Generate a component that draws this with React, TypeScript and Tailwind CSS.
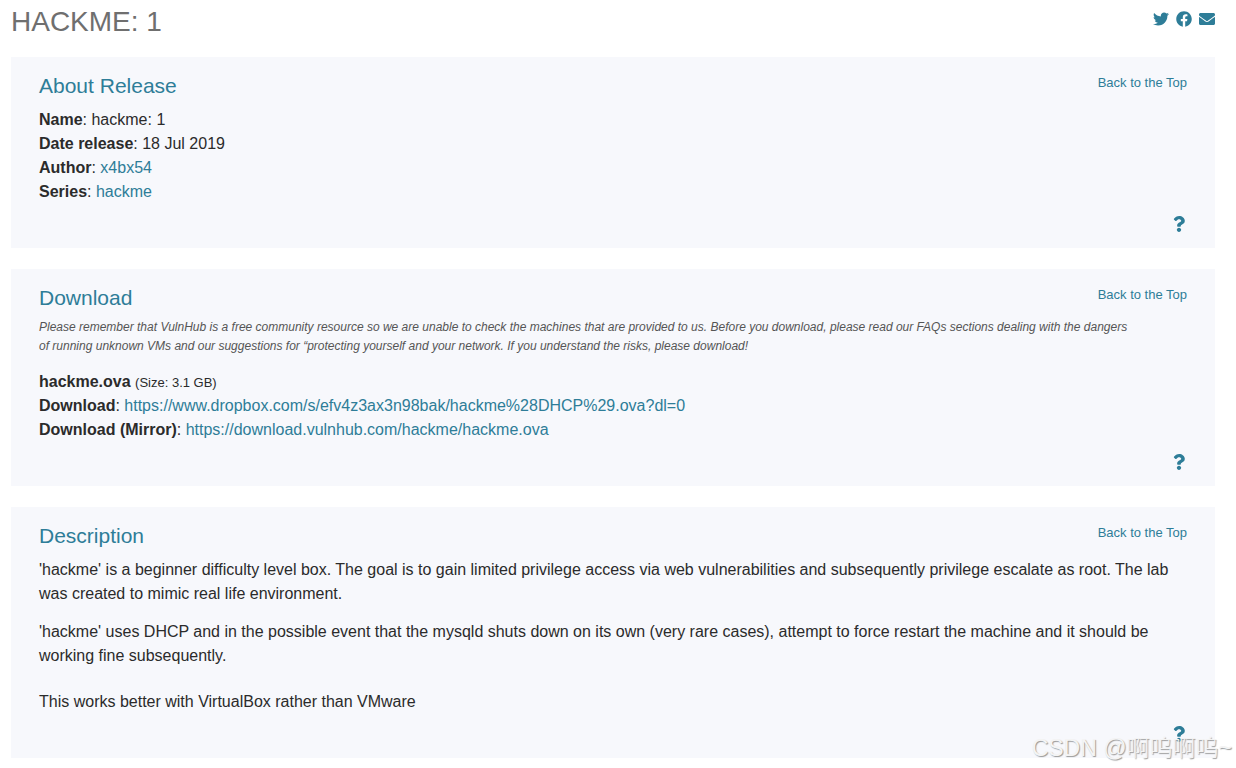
import type { ReactNode } from "react";
import { FaEnvelope, FaFacebook, FaQuestion, FaTwitter } from "react-icons/fa";

const links = [
  { label: "Twitter", icon: FaTwitter },
  { label: "Facebook", icon: FaFacebook },
  { label: "Email", icon: FaEnvelope },
];

function Panel({ id, title, children }: { id: string; title: string; children: ReactNode }) {
  return (
    <section id={id} className="bg-[#f7f8fc] px-7 pt-4 pb-3">
      <div className="flex items-start justify-between">
        <h2 className="text-[21px] leading-[26px] text-[#2e7d98]">{title}</h2>
        <a href="#top" className="text-[13px] leading-5 text-[#2e7d98]">Back to the Top</a>
      </div>
      {children}
      <div className="flex justify-end">
        <a href={`#${id}`} aria-label={`Help: ${title}`} className="mt-2 flex h-6 items-center text-[#2e7d98]">
          <FaQuestion size={16} />
        </a>
      </div>
    </section>
  );
}

export default function App() {
  return (
    <div id="top" className="relative bg-white pr-[21px] pb-2.5 pl-[11px] font-['Liberation_Sans',Arial,sans-serif] text-base leading-6 text-[#2b2b2b]">
      <header className="flex items-start justify-between pt-[3px] pb-4">
        <h1 className="text-[28px] leading-[38px] text-[#6f6f6f]">HACKME: 1</h1>
        <nav className="flex gap-[7px] pt-2">
          {links.map(({ label, icon: Icon }) => (
            <a key={label} href="#top" aria-label={label} className="text-[#2e7d98]">
              <Icon size={16} />
            </a>
          ))}
        </nav>
      </header>

      <main className="flex flex-col gap-[21px]">
        <Panel id="release" title="About Release">
          <ul className="pt-[9px]">
            <li><b>Name</b>: hackme: 1</li>
            <li><b>Date release</b>: 18 Jul 2019</li>
            <li><b>Author</b>: <a href="#release" className="text-[#2e7d98]">x4bx54</a></li>
            <li><b>Series</b>: <a href="#release" className="text-[#2e7d98]">hackme</a></li>
          </ul>
        </Panel>

        <Panel id="download" title="Download">
          <p className="pt-[7px] text-xs leading-[19px] text-[#555] italic">
            Please remember that VulnHub is a free community resource so we are unable to check the machines that are provided to us. Before you download, please read our FAQs sections dealing with the dangers
            <br />
            of running unknown VMs and our suggestions for “protecting yourself and your network. If you understand the risks, please download!
          </p>
          <ul className="pt-3.5">
            <li><b>hackme.ova</b> <span className="text-[13px] leading-4">(Size: 3.1 GB)</span></li>
            <li><b>Download</b>: <a href="#download" className="text-[#2e7d98]">https://www.dropbox.com/s/efv4z3ax3n98bak/hackme%28DHCP%29.ova?dl=0</a></li>
            <li><b>Download (Mirror)</b>: <a href="#download" className="text-[#2e7d98]">https://download.vulnhub.com/hackme/hackme.ova</a></li>
          </ul>
        </Panel>

        <Panel id="description" title="Description">
          <div className="pt-[9px]">
            <p>'hackme' is a beginner difficulty level box. The goal is to gain limited privilege access via web vulnerabilities and subsequently privilege escalate as root. The lab was created to mimic real life environment.</p>
            <p className="pt-3.5">'hackme' uses DHCP and in the possible event that the mysqld shuts down on its own (very rare cases), attempt to force restart the machine and it should be working fine subsequently.</p>
            <p className="pt-[22px]">This works better with VirtualBox rather than VMware</p>
          </div>
        </Panel>
      </main>

      {/* watermark */}
      <div className="pointer-events-none absolute right-1 bottom-1 font-['Liberation_Sans','Noto_Sans_CJK_SC',sans-serif] text-[23px] leading-8 font-light text-[#f4f4f4] [text-shadow:1px_1px_1px_#999]">
        CSDN @啊呜啊呜~
      </div>
    </div>
  );
}
